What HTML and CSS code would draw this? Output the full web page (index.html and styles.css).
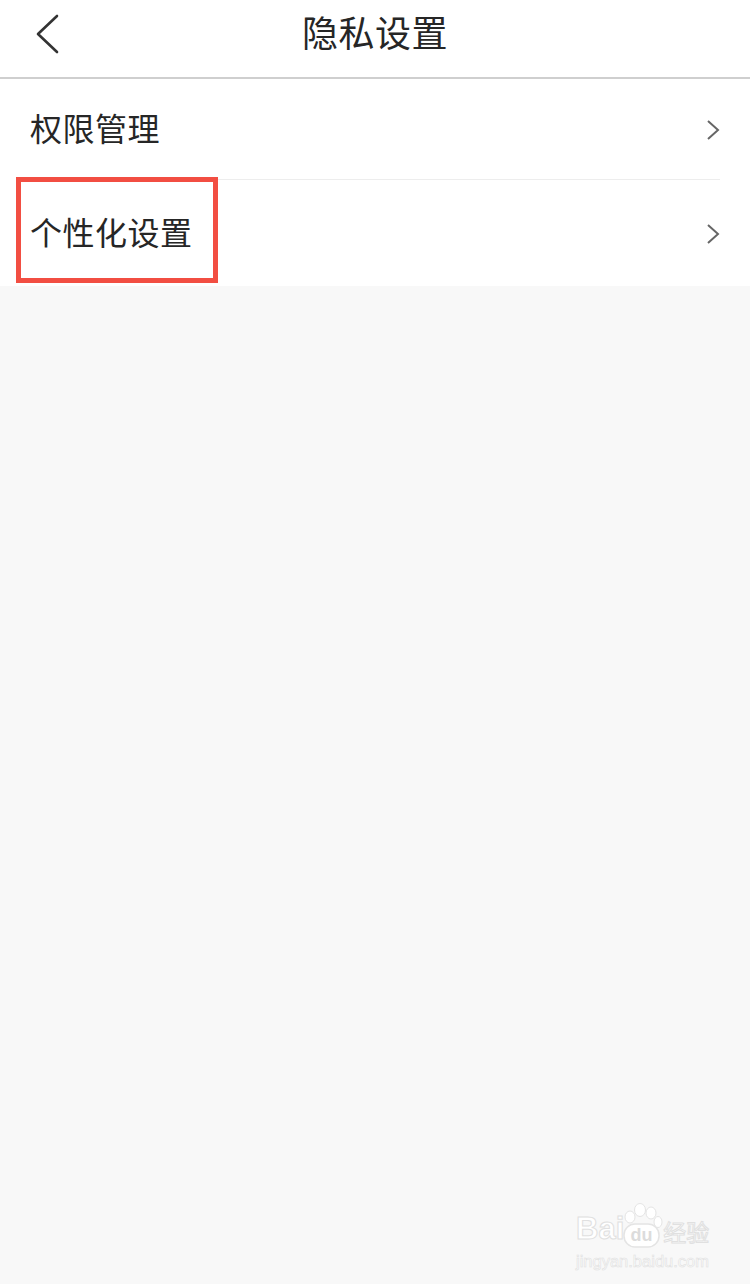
FILE: index.html
```html
<!DOCTYPE html>
<html lang="zh-CN">
<head>
    <meta charset="UTF-8">
    <meta name="viewport" content="width=device-width, initial-scale=1.0">
    <title>隐私设置</title>
    <link rel="stylesheet" href="styles.css">
</head>
<body>
    <header class="topbar">
        <svg class="back-icon" width="24" height="40" viewBox="0 0 24 40">
            <path d="M22 2 L3 20 L22 38" fill="none" stroke="#333" stroke-width="2.6" stroke-linecap="round" stroke-linejoin="round"/>
        </svg>
        <h1>隐私设置</h1>
    </header>

    <ul class="menu">
        <li class="menu-item">
            <span>权限管理</span>
            <svg class="arrow" width="14" height="22" viewBox="0 0 14 22">
                <path d="M2 2 L12 11 L2 20" fill="none" stroke="#666" stroke-width="2"/>
            </svg>
        </li>
        <li class="menu-item">
            <span>个性化设置</span>
            <svg class="arrow" width="14" height="22" viewBox="0 0 14 22">
                <path d="M2 2 L12 11 L2 20" fill="none" stroke="#666" stroke-width="2"/>
            </svg>
        </li>
    </ul>

    <div class="highlight"></div>

    <div class="watermark">
        <div class="wm-top">
            <span class="wm-bai">Bai</span>
            <svg class="wm-paw" width="42" height="46" viewBox="0 0 42 46">
                <ellipse cx="19" cy="7" rx="5.5" ry="6.5" fill="#fff" stroke="#e4e4e4"/>
                <ellipse cx="30" cy="10" rx="5" ry="6" fill="#fff" stroke="#e4e4e4"/>
                <ellipse cx="9" cy="14" rx="5" ry="6" fill="#fff" stroke="#e4e4e4"/>
                <ellipse cx="37" cy="19" rx="4" ry="5.5" fill="#fff" stroke="#e4e4e4"/>
                <rect x="3" y="21" width="35" height="23" rx="11" fill="#fff" stroke="#e4e4e4" stroke-width="1.5"/>
                <text x="20.5" y="38" text-anchor="middle" class="wm-du">du</text>
            </svg>
            <span class="wm-cn">经验</span>
        </div>
        <div class="wm-url">jingyan.baidu.com</div>
    </div>
</body>
</html>
```

FILE: styles.css
```css
* {
    box-sizing: border-box;
}

body {
    margin: 0;
    height: 1284px;
    overflow: hidden;
    position: relative;
    background-color: #f8f8f8;
    color: #262626;
    font-family: "Liberation Sans", "Noto Sans CJK SC", sans-serif;
}

.topbar {
    height: 79px;
    background: #fff;
    border-bottom: 2px solid #cfcfcf;
    display: flex;
    align-items: center;
    justify-content: center;
    position: relative;
}

.topbar h1 {
    margin: 0 0 8px;
    font-size: 36px;
    font-weight: normal;
    line-height: 48px;
    letter-spacing: 0.5px;
}

.back-icon {
    position: absolute;
    left: 35px;
    top: 14px;
}

.menu {
    list-style: none;
    margin: 0;
    padding: 0 30px;
    background: #fff;
}

.menu-item {
    display: flex;
    align-items: center;
    justify-content: space-between;
    font-size: 32px;
    letter-spacing: 0.5px;
    line-height: 44px;
    height: 101px;
    padding-top: 2px;
    border-bottom: 1px solid #ededed;
}

.menu-item:last-child {
    height: 106px;
    padding-top: 2px;
    border-bottom: none;
}

.highlight {
    position: absolute;
    left: 16px;
    top: 177px;
    width: 202px;
    height: 106px;
    border: 5px solid #f24e42;
}

.watermark {
    position: absolute;
    left: 576px;
    top: 1203px;
    width: 136px;
    color: #fff;
}

.wm-top {
    display: flex;
    align-items: flex-end;
    height: 46px;
}

.wm-bai {
    font-size: 31px;
    font-weight: bold;
    line-height: 36px;
    margin-bottom: 2px;
    -webkit-text-stroke: 1px #e0e0e0;
}

.wm-paw {
    margin-left: -3px;
    flex: none;
}

.wm-du {
    font-size: 18px;
    font-weight: bold;
    fill: #dcdcdc;
}

.wm-cn {
    font-size: 23px;
    line-height: 32px;
    white-space: nowrap;
    -webkit-text-stroke: 1px #e0e0e0;
}

.wm-url {
    font-size: 16.5px;
    line-height: 18px;
    margin-top: 3px;
    white-space: nowrap;
    -webkit-text-stroke: 0.6px #e0e0e0;
}
```
